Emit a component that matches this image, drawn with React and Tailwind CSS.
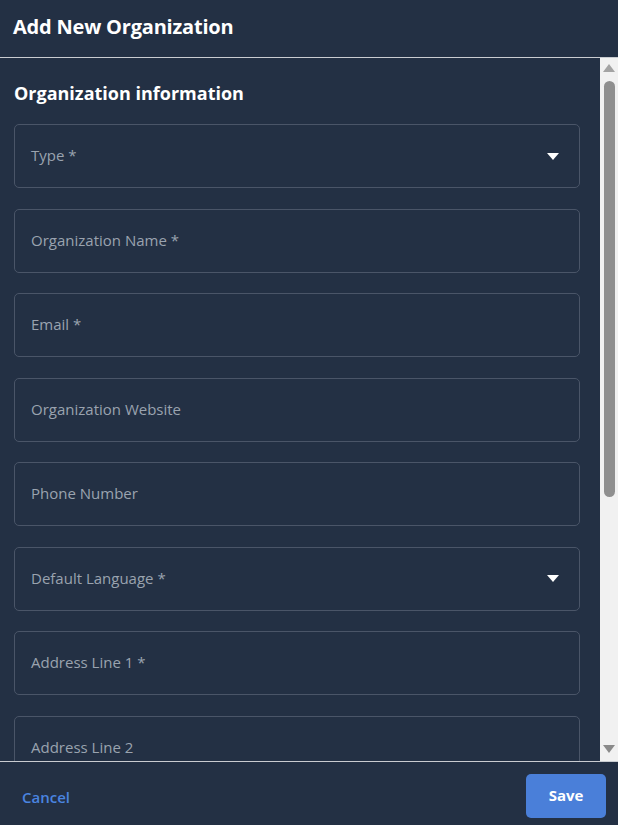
import React from 'react';

const fields = [
  { label: 'Type *', select: true },
  { label: 'Organization Name *' },
  { label: 'Email *' },
  { label: 'Organization Website' },
  { label: 'Phone Number' },
  { label: 'Default Language *', select: true },
  { label: 'Address Line 1 *' },
  { label: 'Address Line 2' },
];

const Caret = () => (
  <svg width="12" height="7" viewBox="0 0 12 7" className="shrink-0">
    <path d="M0 0h12L6 7z" fill="#ffffff" />
  </svg>
);

const App = () => {
  return (
    <div
      className="w-[618px] h-[825px] flex flex-col bg-[#233044] text-white overflow-hidden"
      style={{ fontFamily: '"Open Sans", "Noto Sans", sans-serif' }}
    >
      {/* Header */}
      <div className="h-[58px] shrink-0 flex items-center px-[13px] border-b border-[#c9ccd1]">
        <h1 className="text-[20px] font-bold tracking-[-0.2px] -mt-[4px]">Add New Organization</h1>
      </div>

      {/* Body */}
      <div className="flex-1 flex min-h-0">
        <div className="flex-1 overflow-hidden pl-[14px] pr-[20px]">
          <h2 className="text-[18px] font-bold mt-[21px] mb-[17px] leading-[28px]">
            Organization information
          </h2>
          <div className="flex flex-col gap-[20.5px]">
            {fields.map((f) => (
              <div
                key={f.label}
                className="h-[64px] shrink-0 rounded-[5px] border border-[#4a5568] flex items-center justify-between pl-[16px] pr-[20px]"
              >
                <span className="text-[15px] text-[#9aa3af] -mt-[1px]">{f.label}</span>
                {f.select && <Caret />}
              </div>
            ))}
          </div>
        </div>

        {/* Scrollbar */}
        <div className="w-[18px] shrink-0 bg-[#f1f1f1] flex flex-col items-center">
          <svg width="12" height="8" viewBox="0 0 12 8" className="mt-[6px]">
            <path d="M6 0l6 8H0z" fill="#a3a3a3" />
          </svg>
          <div className="w-[11px] h-[416px] mt-[9px] rounded-full bg-[#8f8f8f]" />
          <div className="flex-1" />
          <svg width="12" height="8" viewBox="0 0 12 8" className="mb-[8px]">
            <path d="M0 0h12L6 8z" fill="#8a8a8a" />
          </svg>
        </div>
      </div>

      {/* Footer */}
      <div className="h-[64px] shrink-0 border-t border-[#c9ccd1] flex items-center justify-between pl-[22px] pr-[12px] pt-[4px]">
        <button className="text-[15px] text-[#4a84e0] font-semibold mt-[3px]">Cancel</button>
        <button className="w-[80px] h-[44px] rounded-[5px] bg-[#4a7fd9] text-white text-[15px] font-bold">
          Save
        </button>
      </div>
    </div>
  );
};

export default App;
